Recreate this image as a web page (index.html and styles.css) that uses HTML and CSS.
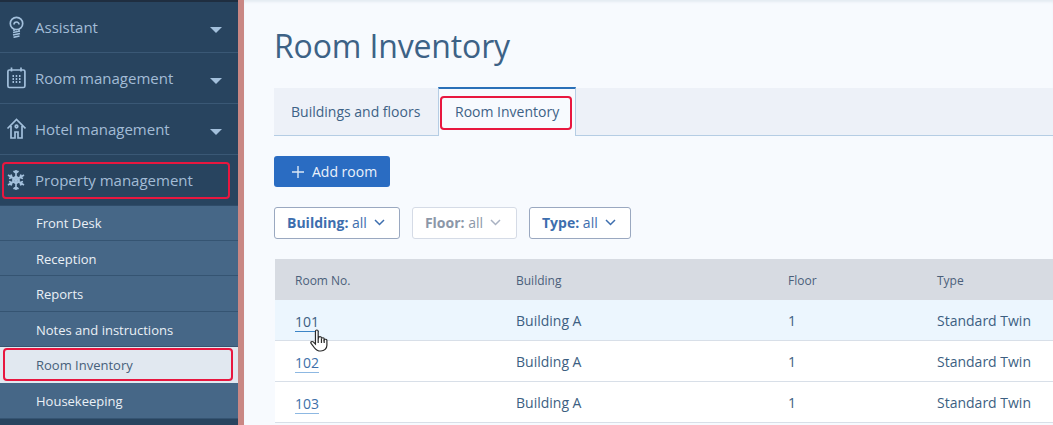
FILE: index.html
```html
<!DOCTYPE html>
<html lang="en">
<head>
<meta charset="utf-8">
<title>Room Inventory</title>
<link rel="stylesheet" href="styles.css">
</head>
<body>
<div class="app">
  <nav class="sidebar">
    <div class="nav-item">
      <svg class="nav-icon" viewBox="0 0 20 22"><circle cx="10.500" cy="7.500" r="6.200"/><path d="M8 8.500a2.500 2.500 0 0 1 5 0M8 13.500v1.500M13 13.500v1.500M7 16.500l7-1.500M7 19l7-1.500M7.500 21.300l6-1.300"/></svg>
      <span class="nav-label">Assistant</span><span class="caret"></span>
    </div>
    <div class="nav-item">
      <svg class="nav-icon" viewBox="0 0 20 22"><rect x="1.900" y="3" width="17" height="17.500" rx="1.500"/><path d="M5.500 .5v4M15 .5v4"/><path class="dots" d="M6.500 9h1.500M9.700 9h1.500M13 9h1.500M6.500 12h1.500M9.700 12h1.500M13 12h1.500M6.500 15h1.500M9.700 15h1.500M13 15h1.500"/></svg>
      <span class="nav-label">Room management</span><span class="caret"></span>
    </div>
    <div class="nav-item">
      <svg class="nav-icon" viewBox="0 0 20 22"><path d="M1.500 10.500 10.500 1.500l9 9M5 8v12h4v-6h3v6h4V8"/><circle cx="10.500" cy="8.500" r="1.300"/></svg>
      <span class="nav-label">Hotel management</span><span class="caret"></span>
    </div>
    <div class="nav-item nav-item-open">
      <svg class="nav-icon" viewBox="0 0 20 22"><path d="M10 1v20M2 6l16 10M18 6 2 16M10 4 7.500 2M10 4l2.500-2M10 18l-2.500 2M10 18l2.500 2M3 9.500l3-1-1-3M17 9.500l-3-1 1-3M3 12.500l3 1-1 3M17 12.500l-3 1 1 3M10 7.500l3 1.800v3.400l-3 1.800-3-1.800V9.300z"/></svg>
      <span class="nav-label">Property management</span>
      <span class="mark mark-nav"></span>
    </div>
    <ul class="subnav">
      <li>Front Desk</li>
      <li>Reception</li>
      <li>Reports</li>
      <li>Notes and instructions</li>
      <li class="active">Room Inventory<span class="mark mark-sub"></span></li>
      <li>Housekeeping</li>
    </ul>
  </nav>
  <div class="edge"></div>
  <main class="main">
    <h1>Room Inventory</h1>
    <div class="tabs">
      <div class="tab">Buildings and floors</div>
      <div class="tab tab-active">Room Inventory<span class="mark mark-tab"></span></div>
    </div>
    <button class="add-btn"><svg viewBox="0 0 13 13"><path d="M6.500 0v13M0 6.500h13"/></svg>Add room</button>
    <div class="filters">
      <div class="filter"><b>Building:</b> all<svg viewBox="0 0 11 7"><path d="m1 1 4.500 4.500L10 1"/></svg></div>
      <div class="filter filter-off"><b>Floor:</b> all<svg viewBox="0 0 11 7"><path d="m1 1 4.500 4.500L10 1"/></svg></div>
      <div class="filter"><b>Type:</b> all<svg viewBox="0 0 11 7"><path d="m1 1 4.500 4.500L10 1"/></svg></div>
    </div>
    <div class="table">
      <div class="row head"><div>Room No.</div><div>Building</div><div>Floor</div><div>Type</div></div>
      <div class="row hover"><div><a class="room">101</a><svg class="cursor" viewBox="0.500 0 16.500 24" preserveAspectRatio="none"><path d="M5.500 2.500c0-2 2.500-2 2.500 0v8l.5-2c1-1 2.500-.5 2.500.5v1c.5-1.200 2.500-1 2.500.3v1c.6-1 2.500-.8 2.500.7v5c0 3.500-2.500 6-5.500 6-3 0-4.500-1-6-3.500l-3-4.500c-.8-1.300.8-2.700 2-1.500l2 2.300z"/><path class="fold" d="M8 10.500v4M11 10v4.500M13.500 11v3.500"/></svg></div><div>Building A</div><div>1</div><div>Standard Twin</div></div>
      <div class="row"><div><a class="room">102</a></div><div>Building A</div><div>1</div><div>Standard Twin</div></div>
      <div class="row"><div><a class="room">103</a></div><div>Building A</div><div>1</div><div>Standard Twin</div></div>
    </div>
  </main>
</div>
</body>
</html>
```
FILE: styles.css
```css
* { box-sizing: border-box; }
html, body { margin: 0; height: 100%; }
body { font-family: "Open Sans", "Noto Sans", sans-serif; overflow: hidden; background: #f7fafe; }
.app { display: flex; width: 1053px; height: 425px; overflow: hidden; }

.sidebar { width: 238px; flex: none; background: #28445f; border-top: 2px solid #1f2e40; }
.nav-item { position: relative; display: flex; align-items: center; height: 51px; border-bottom: 1px solid #3a5875; color: #a3bcd6; font-size: 15px; }
.nav-item-open { height: 50px; border-bottom: 0; }
.nav-icon { width: 20px; height: 22px; margin: 0 5px 0 6px; flex: none; fill: none; stroke: #a3c0dc; stroke-width: 1.700; }
.nav-icon .dots { stroke-width: 2; }
.nav-label { margin-left: 4px; }
.caret { margin-left: auto; margin-right: 16px; margin-top: 6px; width: 0; height: 0; border: 6px solid transparent; border-top: 6px solid #a3c0dc; border-bottom: 0; }

.subnav { list-style: none; margin: 0; padding: 0; background: #466787; box-shadow: inset 0 1px 0 #2f4c69; color: #eaf0f6; font-size: 13px; }
.subnav li { position: relative; height: 35.600px; display: flex; align-items: center; padding: 2px 0 0 36px; border-bottom: 1px solid #355472; }
.subnav li.active { padding-top: 0; background: #e1e8f0; color: #47607a; border-bottom: 1px solid #e1e8f0; }

.mark { position: absolute; border: 2px solid #e8173f; border-radius: 4px; pointer-events: none; }
.mark-nav { left: 2px; right: 8px; top: 7px; bottom: 6px; }
.mark-sub { left: 3px; right: 5px; top: 1px; bottom: 1px; }
.mark-tab { left: 1px; right: 3px; top: 7px; bottom: 6px; }

.edge { width: 6px; flex: none; background: #c98784; }

.main { flex: 1; min-width: 0; padding: 0 0 0 30px; box-shadow: inset 0 3px 3px -1px #e4ebf2; }
h1 { margin: 0; padding-top: 24px; height: 88px; font-size: 32px; letter-spacing: -.15px; line-height: 44px; font-weight: 400; color: #3d6286; }

.tabs { display: flex; height: 48px; background: #edf1f8; border-bottom: 1px solid #b5cde4; margin-bottom: 20px; font-size: 14px; color: #3d6286; }
.tab { display: flex; align-items: center; height: 47px; padding: 0 17px; }
.tab:first-child { width: 164px; }
.tab-active { position: relative; margin-top: -1px; height: 49px; background: #f7fafe; border-top: 2px solid #2a70b8; border-left: 1px solid #b5cde4; border-right: 1px solid #b5cde4; padding: 0 16px 2px; }

.add-btn { display: flex; align-items: center; height: 31px; width: 116px; padding: 0 0 0 18px; border: 0; border-radius: 3px; background: #2a6cc2; color: #eaf2fb; font: 14px "Open Sans", sans-serif; }
.add-btn svg { width: 12px; height: 12px; margin-right: 8px; fill: none; stroke: #dbe8f6; stroke-width: 1.500; }

.filters { display: flex; gap: 12px; margin-top: 20px; margin-bottom: 20px; }
.filter { display: flex; align-items: center; height: 32px; padding: 0 14px 1px 12px; border: 1px solid #9aa8c0; border-radius: 3px; background: #fff; color: #3d6eae; font-size: 14px; white-space: pre; }
.filter b { font-weight: 700; }
.filter svg { width: 11px; height: 7px; margin-left: 7px; fill: none; stroke: #3d6eae; stroke-width: 1.500; }
.filter-off { padding-right: 15px; border-color: #d5dbe6; color: #8c97a8; }
.filter-off svg { stroke: #a9b2c2; }

.table { margin-left: 1px; font-size: 14px; color: #3d5f82; }
.row { display: grid; grid-template-columns: 221px 272px 149px 1fr; height: 41px; align-items: center; background: #fff; border-bottom: 1px solid #d8dfe8; }
.row > div { position: relative; padding-left: 20px; }
.head { padding-top: 2px; background: #d7dbe2; border-bottom: 0; font-size: 12px; color: #4b5f7a; }
.hover { background: #ecf6fe; }
.room { display: inline-block; line-height: 19px; padding-top: 4px; color: #3d6fa8; border-bottom: 1px solid #8db8e2; }
.hover .room { color: #3d5f82; border-bottom-color: #3d85c6; }
.cursor { position: absolute; left: 35px; top: 21px; width: 18px; height: 23px; fill: #fff; stroke: #2a2a2a; stroke-width: 1.100; }
.cursor .fold { fill: none; }
```
